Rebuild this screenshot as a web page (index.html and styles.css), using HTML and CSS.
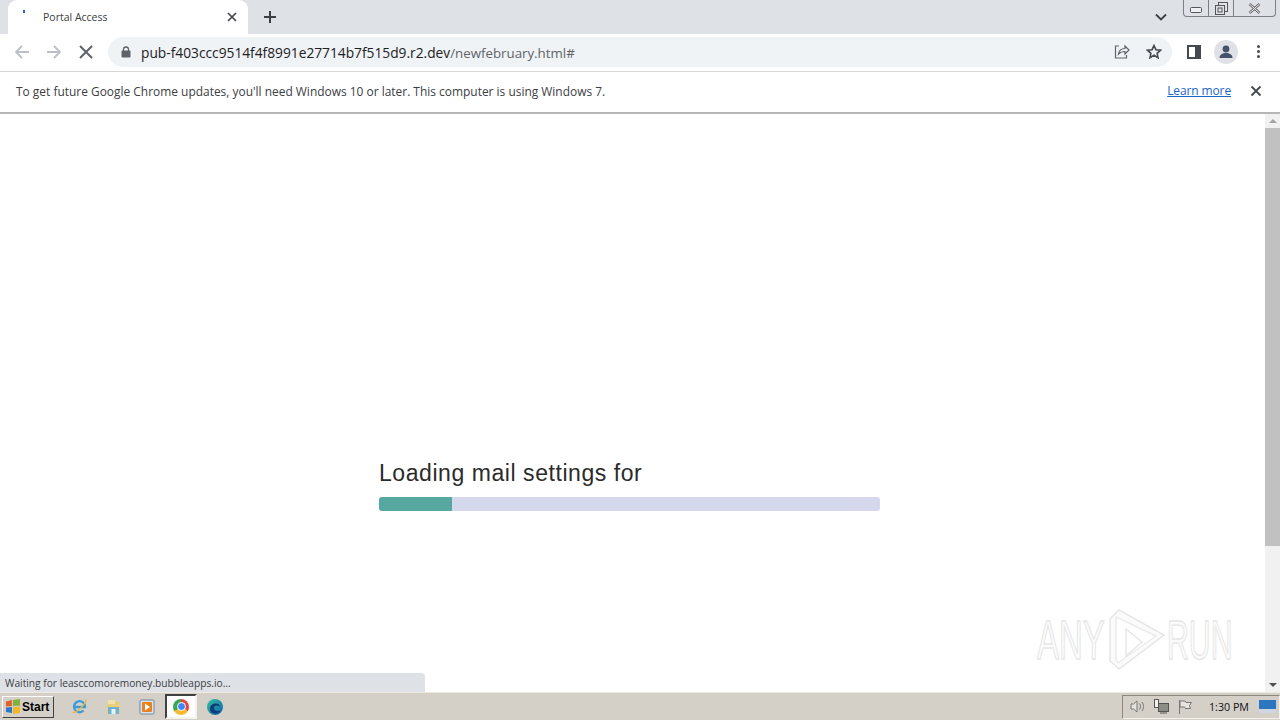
FILE: index.html
```html
<!DOCTYPE html>
<html lang="en">
<head>
<meta charset="utf-8">
<title>Portal Access</title>
<link rel="stylesheet" href="styles.css">
</head>
<body>
<div class="screen">
  <header class="tabstrip">
    <div class="tab">
      <span class="favicon"></span>
      <span class="tab-title">Portal Access</span>
      <svg class="ico tab-close" width="12" height="12" viewBox="0 0 12 12"><path d="M2 2l8 8M10 2l-8 8" stroke="#45484d" stroke-width="1.700" fill="none"/></svg>
    </div>
    <svg class="ico new-tab" width="14" height="14" viewBox="0 0 14 14"><path d="M7 1v12M1 7h12" stroke="#3c4043" stroke-width="2" fill="none"/></svg>
    <div class="strip-spacer"></div>
    <svg class="ico tab-search" width="12" height="8" viewBox="0 0 12 8"><path d="M1 1.500l5 5 5-5" stroke="#3c4043" stroke-width="1.800" fill="none"/></svg>
    <div class="winctl">
      <span class="winbtn min"><svg width="12" height="6" viewBox="0 0 12 6"><rect x="0.500" y="0.500" width="11" height="5" rx="1" fill="#eef0f3" stroke="#555"/></svg></span>
      <span class="winbtn max"><svg width="13" height="13" viewBox="0 0 13 13"><rect x="3.500" y="0.500" width="9" height="9" fill="none" stroke="#555"/><rect x="0.500" y="3.500" width="9" height="9" fill="#dee1e6" stroke="#555"/><rect x="3" y="6" width="4" height="4" fill="none" stroke="#555"/></svg></span>
      <span class="winbtn close"><svg width="13" height="11" viewBox="0 0 13 11"><path d="M1.500 1l10 9M11.500 1l-10 9" stroke="#666" stroke-width="2.400" fill="none"/><path d="M1.500 1l10 9M11.500 1l-10 9" stroke="#f2f2f2" stroke-width="1" fill="none"/></svg></span>
    </div>
  </header>

  <nav class="toolbar">
    <svg class="ico nav-btn" width="16" height="16" viewBox="0 0 16 16"><path d="M15 8H2M8 2L2 8l6 6" stroke="#bcc0c4" stroke-width="1.800" fill="none"/></svg>
    <svg class="ico nav-btn" width="16" height="16" viewBox="0 0 16 16"><path d="M1 8h13M8 2l6 6-6 6" stroke="#bcc0c4" stroke-width="1.800" fill="none"/></svg>
    <svg class="ico nav-btn" width="16" height="16" viewBox="0 0 16 16"><path d="M2 2l12 12M14 2L2 14" stroke="#5f6368" stroke-width="2" fill="none"/></svg>
    <div class="omnibox">
      <svg class="ico lock" width="10" height="12" viewBox="0 0 10 12"><path d="M2.500 5V3.500a2.500 2.500 0 0 1 5 0V5" stroke="#5f6368" stroke-width="1.300" fill="none"/><rect x="0.500" y="4.500" width="9" height="7" rx="1" fill="#5f6368"/></svg>
      <span class="url">pub-f403ccc9514f4f8991e27714b7f515d9.r2.dev<span class="url-path">/newfebruary.html#</span></span>
      <svg class="ico share" width="16" height="15" viewBox="0 0 16 15"><path d="M5 2H1.500v12h11v-3" stroke="#5f6368" stroke-width="1.200" fill="none"/><path d="M4.500 10c.5-3.500 3-5.500 6.500-5.500V2l4 4-4 4V7.500c-2.500 0-5 .8-6.500 2.500z" stroke="#5f6368" stroke-width="1.200" fill="none"/></svg>
      <svg class="ico star" width="16" height="15" viewBox="0 0 16 15"><path d="M8 1.500l1.900 4.200 4.600.5-3.400 3.100.9 4.500L8 11.100l-4 2.700.9-4.500L1.500 6.200l4.600-.5z" stroke="#45484d" stroke-width="1.600" fill="none"/></svg>
    </div>
    <svg class="ico panel" width="14" height="14" viewBox="0 0 14 14"><rect x="1" y="1" width="12" height="12" fill="#fff" stroke="#45484d" stroke-width="2"/><rect x="8" y="1" width="5" height="12" fill="#45484d"/></svg>
    <span class="avatar"><svg width="16" height="16" viewBox="0 0 16 16"><circle cx="8" cy="5" r="3.400" fill="#46526b"/><path d="M1.500 14c0-3.500 3-5 6.500-5s6.500 1.500 6.500 5z" fill="#46526b"/></svg></span>
    <span class="kebab"><i></i><i></i><i></i></span>
  </nav>

  <aside class="infobar">
    <p class="info-text">To get future Google Chrome updates, you'll need Windows 10 or later. This computer is using Windows 7.</p>
    <a class="learn" href="#">Learn more</a>
    <svg class="ico info-close" width="12" height="12" viewBox="0 0 12 12"><path d="M1.500 1.500l9 9M10.500 1.500l-9 9" stroke="#45484d" stroke-width="1.800" fill="none"/></svg>
  </aside>

  <main class="viewport">
    <section class="content">
      <h1 class="loading">Loading mail settings for</h1>
      <div class="track"><div class="fill" style="width:14.6%"></div></div>
    </section>
    <div class="scrollbar">
      <span class="arrow up"></span>
      <span class="thumb"></span>
      <span class="rest"></span>
      <span class="arrow down"></span>
    </div>
    <div class="status">Waiting for leasccomoremoney.bubbleapps.io...</div>
    <div class="watermark">
      <span class="wm-word">ANY</span>
      <svg class="wm-logo" width="62" height="62" viewBox="0 0 62 62"><path d="M15 1L60 26 15 60 6 52V10z" stroke="#e6e6e6" stroke-width="1.500" fill="#fbfbfb"/><path d="M12 8L52 27 14 54 12 50z" stroke="#ececec" stroke-width="1.500" fill="#fff"/><path d="M22 20l16 13-16 14z" stroke="#e6e6e6" stroke-width="1.500" fill="#fff"/></svg>
      <span class="wm-word wm-run">RUN</span>
    </div>
  </main>

  <footer class="taskbar">
    <button class="start"><svg width="16" height="15" viewBox="0 0 16 15"><path d="M1 2.500l6-1.500v6l-6 .5z" fill="#e2622b"/><path d="M8 1l7-1v6.500l-7 .5z" fill="#7fb43c"/><path d="M1 8.500l6-.5v6l-6-1z" fill="#2f77c9"/><path d="M8 8l7-.5V14l-7 1z" fill="#f0b828"/></svg>Start</button>
    <div class="quick">
      <span class="tb-icon"><svg width="17" height="17" viewBox="0 0 17 17"><path d="M3.500 9h10.500A5.500 5.500 0 1 0 12.500 12.500" fill="none" stroke="#3f9ad8" stroke-width="2.300"/><path d="M1.500 14.500C6 14.500 13 8 15.500 1.500" stroke="#e6b93c" stroke-width="1.200" fill="none"/></svg></span>
      <span class="tb-icon"><svg width="17" height="17" viewBox="0 0 17 17"><rect x="2" y="4" width="13" height="12" fill="#e7cf7e"/><rect x="3" y="2" width="7" height="4" fill="#f2e2a8"/><rect x="3" y="9" width="11" height="7" fill="#6fb2cf"/><rect x="6.500" y="11" width="4" height="5" fill="#e7f2f7"/></svg></span>
      <span class="tb-icon"><svg width="16" height="16" viewBox="0 0 16 16"><rect x="1" y="1" width="14" height="14" rx="1" fill="#dde3ea" stroke="#6d87a8"/><rect x="3" y="3" width="10" height="10" rx="1" fill="#e8821e"/><path d="M6 4.500l5 3.500-5 3.500z" fill="#fff"/></svg></span>
      <span class="tb-icon active"><span class="chrome"><span class="chrome-dot"></span></span></span>
      <span class="tb-icon"><svg width="18" height="18" viewBox="0 0 18 18"><defs><linearGradient id="edge" x1="0" y1="0" x2="1" y2="1"><stop offset="0" stop-color="#35c1a0"/><stop offset="1" stop-color="#0f5fae"/></linearGradient></defs><circle cx="9" cy="9" r="8" fill="url(#edge)"/><path d="M4 11c0-4 3-5.500 6-5.500 2 0 3.500 1 4 3-2-1-6-1.500-6 1.500 0 2.500 3 3.500 7 2.500-2 3-5 3.500-7 3-2.500-.5-4-2-4-4.500z" fill="#0c3f78"/></svg></span>
    </div>
    <div class="tb-spacer"></div>
    <div class="tray">
      <svg width="17" height="15" viewBox="0 0 17 15"><path d="M2 5h2.500L8 2v11L4.500 10H2z" fill="#e4e1da" stroke="#777"/><path d="M10.500 4.500c1.300 1.700 1.300 4.300 0 6M13 3c2 2.500 2 6.500 0 9" stroke="#777" fill="none"/></svg>
      <svg width="17" height="15" viewBox="0 0 17 15"><rect x="5.500" y="4.500" width="10" height="8" fill="#8d8d86" stroke="#555"/><rect x="1.500" y="0.500" width="4" height="8" fill="#f3f1ec" stroke="#555"/><path d="M7 14h7" stroke="#555"/></svg>
      <svg width="16" height="15" viewBox="0 0 16 15"><path d="M2.500 1v14" stroke="#777"/><path d="M3 2h5l1 1.500h5.500l-2 3 1 3H8.500l-1-1.500H3z" fill="#e7e4dd" stroke="#777"/></svg>
      <span class="clock">1:30 PM</span>
      <svg class="desktop" width="17" height="13" viewBox="0 0 17 13"><rect width="17" height="11" fill="#2b76bf"/><rect y="9" width="17" height="4" fill="#cfd6df"/></svg>
    </div>
  </footer>
</div>
</body>
</html>
```
FILE: styles.css
```css
* { box-sizing: border-box; }
html, body { margin: 0; padding: 0; }
body { width: 1280px; height: 720px; overflow: hidden; background: #fff; font-family: "Open Sans", "Liberation Sans", sans-serif; }
.screen { width: 1280px; height: 720px; display: flex; flex-direction: column; }
.ico { display: block; flex: none; }

.tabstrip { height: 34px; flex: none; display: flex; align-items: flex-end; background: #dee1e6; padding-left: 8px; }
.tab { width: 240px; height: 34px; background: #fff; border-radius: 9px 9px 0 0; display: flex; align-items: center; padding-left: 12px; padding-right: 10px; }
.favicon { width: 2px; height: 3px; background: #2a5fc0; margin-right: 18px; margin-left: 3px; margin-top: -12px; flex: none; }
.tab-title { font-size: 10.5px; color: #3c4043; flex: 1; }
.new-tab { margin: 0 0 10px 15px; }
.strip-spacer { flex: 1; }
.tab-search { margin-bottom: 13px; margin-right: 16px; }
.winctl { align-self: flex-start; display: flex; height: 17px; width: 93px; margin-right: 4px; border: 1px solid #7c7f86; border-top: 0; border-radius: 0 0 4px 4px; }
.winbtn { display: flex; align-items: center; justify-content: center; border-right: 1px solid #7c7f86; }
.winbtn svg { display: block; }
.min { width: 25px; padding-top: 4px; }
.max { width: 25px; }
.close { flex: 1; border-right: 0; }

.toolbar { height: 38px; flex: none; display: flex; align-items: center; background: #fff; border-bottom: 1px solid #d6d7d9; padding-left: 14px; padding-bottom: 2px; }
.nav-btn { margin-right: 16px; }
.omnibox { width: 1064px; height: 30px; margin-left: -2px; border-radius: 15px; background: #f0f3f6; display: flex; align-items: center; padding: 0 10px 0 13px; }
.lock { margin-right: 10px; }
.url { font-size: 13.75px; color: #202124; flex: 1; white-space: nowrap; padding-top: 1px; }
.url-path { color: #5f6368; font-size: 13.3px; }
.share { margin-right: 16px; }
.panel { margin-left: 15px; }
.avatar { width: 24px; height: 24px; border-radius: 50%; background: #dfe1e6; margin-left: 13px; display: flex; align-items: center; justify-content: center; flex: none; }
.kebab { display: flex; flex-direction: column; gap: 2px; margin-left: 19px; }
.kebab i { width: 3px; height: 3px; border-radius: 50%; background: #45484d; }

.infobar { height: 42px; flex: none; display: flex; align-items: center; background: #fff; border-bottom: 2px solid #b5b6b8; padding: 0 18px 2px 16px; box-shadow: 0 1px 2px #dedede; position: relative; }
.info-text { flex: 1; margin: 0; font-size: 11.95px; color: #3c4043; }
.learn { font-size: 12px; letter-spacing: -0.12px; line-height: 16px; color: #1a66c9; text-decoration: underline; margin-right: 19px; }

.viewport { position: relative; flex: 1; min-height: 0; background: #fff; display: flex; }
.content { flex: 1; padding: 345px 0 0 379px; }
.loading { margin: 0 0 10px; font: 400 23px/28px "Liberation Sans", Arial, sans-serif; color: #2b2b2b; letter-spacing: 0.56px; }
.track { width: 501px; height: 14px; border-radius: 3px; background: #d6d8ee; overflow: hidden; }
.fill { height: 100%; background: #58a8a2; }

.scrollbar { width: 15px; flex: none; background: #f1f1f1; display: flex; flex-direction: column; align-items: center; }
.arrow { height: 14px; flex: none; width: 15px; display: flex; align-items: center; justify-content: center; }
.arrow::before { content: ""; border-left: 4px solid transparent; border-right: 4px solid transparent; }
.arrow.up::before { border-bottom: 4px solid #a3a3a3; }
.arrow.down::before { border-top: 4px solid #505050; }
.thumb { width: 15px; height: 418px; background: #c1c1c1; flex: none; }
.rest { flex: 1; }

.status { position: absolute; left: 0; bottom: 0; width: 425px; height: 19px; background: #dee1e6; border-top-right-radius: 4px; padding: 3px 0 0 5px; font-size: 10.2px; line-height: 14px; color: #3c4043; }
.watermark { position: absolute; left: 1037px; top: 495px; display: flex; align-items: center; gap: 2px; }
.wm-word { display: block; width: 65px; font: 400 55px/62px "Liberation Sans", Arial, sans-serif; color: #fbfbfb; -webkit-text-stroke: 1.4px #e6e6e6; transform: scaleX(0.6); transform-origin: left center; white-space: nowrap; }
.wm-run { transform: scaleX(0.55); margin-left: -1px; }
.wm-logo { display: block; flex: none; }

.taskbar { height: 28px; flex: none; display: flex; align-items: center; background: #d4d0c8; border-top: 1px solid #eeeae2; padding-left: 2px; }
.start { width: 52px; height: 22px; padding: 0 0 0 2px; display: flex; align-items: center; gap: 1px; background: #d4d0c8; border: 1px solid; border-color: #fff #404040 #404040 #fff; font: 700 12px "Liberation Sans", Arial, sans-serif; color: #000; }
.quick { display: flex; align-items: center; margin-left: 8px; }
.tb-icon { width: 34px; height: 25px; display: flex; align-items: center; justify-content: center; }
.tb-icon.active { width: 32px; background: #fff; border: 2px solid; border-color: #404040 #f4f2ec #f4f2ec #404040; margin: 0 1px; }
.chrome { width: 16px; height: 16px; border-radius: 50%; background: conic-gradient(#e8453c 0 33%, #f9bb2d 33% 66%, #3aa757 66%); display: flex; align-items: center; justify-content: center; }
.chrome-dot { width: 7px; height: 7px; border-radius: 50%; background: #4285f4; border: 1px solid #fff; box-sizing: content-box; }
.tb-spacer { flex: 1; }
.tray { width: 158px; height: 24px; display: flex; align-items: center; gap: 7px; padding-left: 6px; border: 1px solid; border-color: #8b8880 #f4f2ec #f4f2ec #8b8880; }
.clock { font-size: 10.7px; color: #111; margin-left: 9px; white-space: nowrap; }
.desktop { margin-left: 3px; }
```
